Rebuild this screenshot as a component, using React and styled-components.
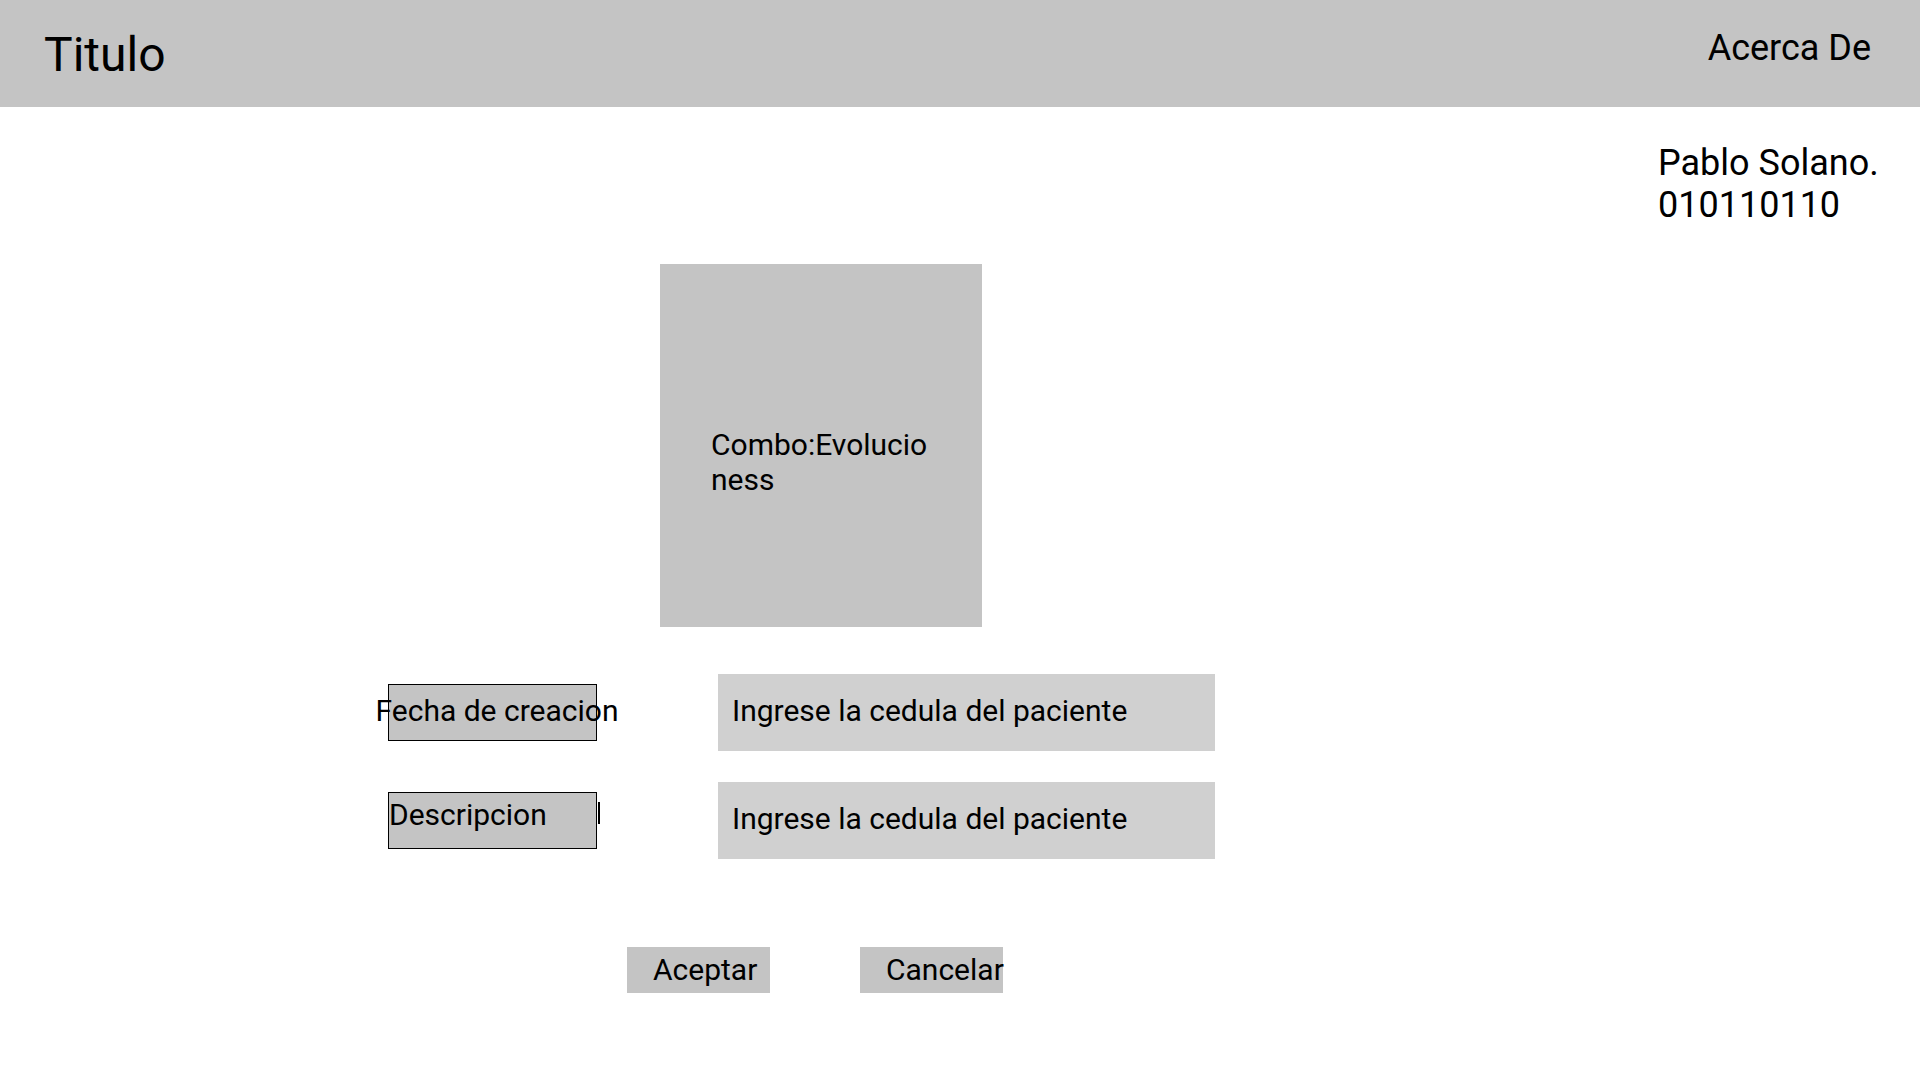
import styled, { createGlobalStyle } from "styled-components";

const GlobalStyle = createGlobalStyle`
    html, body {
        margin: 0;
        padding: 0;
        background: #ffffff;
    }
    body {
        font-family: Roboto, "Noto Sans", sans-serif;
        color: #000000;
    }
`;

export default function App() {
    return (
        <Page>
            <GlobalStyle />
            <Header>
                <Title>Titulo</Title>
                <NavLink>Acerca De</NavLink>
            </Header>
            <UserRow>
                <UserInfo>
                    Pablo Solano.
                    <br />
                    010110110
                </UserInfo>
            </UserRow>
            <Form>
                <ComboBox>
                    Combo:Evolucio
                    <br />
                    ness
                </ComboBox>
                <Fields>
                    <FieldRow>
                        <Label $center>Fecha de creacion</Label>
                        <Input>Ingrese la cedula del paciente</Input>
                    </FieldRow>
                    <FieldRow>
                        <Label>
                            Descripcion
                            <Caret />
                        </Label>
                        <Input>Ingrese la cedula del paciente</Input>
                    </FieldRow>
                </Fields>
                <Actions>
                    <Button>Aceptar</Button>
                    <Button>Cancelar</Button>
                </Actions>
            </Form>
        </Page>
    );
}

const Page = styled.div`
    width: 1920px;
    min-height: 1080px;
    background: #ffffff;
    display: flex;
    flex-direction: column;
`;

const Header = styled.header`
    height: 107px;
    background: #c4c4c4;
    display: flex;
    justify-content: space-between;
    align-items: flex-start;
    padding: 27px 49px 0 44px;
    box-sizing: border-box;
`;

const Title = styled.h1`
    margin: 0;
    font-size: 48px;
    font-weight: 400;
    line-height: 56px;
`;

const NavLink = styled.span`
    font-size: 36px;
    line-height: 42px;
`;

const UserRow = styled.div`
    display: flex;
    justify-content: flex-end;
    padding-right: 38px;
    margin-top: 35px;
`;

const UserInfo = styled.div`
    font-size: 36px;
    line-height: 42px;
    width: 224px;
    white-space: nowrap;
`;

const Form = styled.main`
    display: flex;
    flex-direction: column;
    align-items: flex-start;
    padding-left: 388px;
    margin-top: 38px;
`;

const ComboBox = styled.div`
    width: 322px;
    height: 363px;
    margin-left: 272px;
    background: #c4c4c4;
    box-sizing: border-box;
    padding: 163px 0 0 51px;
    font-size: 30px;
    line-height: 35px;
`;

const Fields = styled.div`
    display: flex;
    flex-direction: column;
    gap: 31px;
    margin-top: 47px;
`;

const FieldRow = styled.div`
    display: flex;
    align-items: center;
    gap: 121px;
`;

const Label = styled.div`
    width: 209px;
    height: 57px;
    box-sizing: border-box;
    border: 1px solid #000000;
    background: #c4c4c4;
    display: flex;
    align-items: center;
    justify-content: ${({ $center }) => ($center ? "center" : "space-between")};
    padding-left: ${({ $center }) => ($center ? "9px" : "0")};
    padding-bottom: ${({ $center }) => ($center ? "4px" : "12px")};
    white-space: nowrap;
    font-size: 30px;
    line-height: 35px;
`;

const Caret = styled.span`
    align-self: flex-start;
    width: 2px;
    height: 22px;
    background: #000000;
    margin-right: -4px;
    margin-top: 9px;
`;

const Input = styled.div`
    width: 497px;
    height: 77px;
    background: #d0d0d0;
    display: flex;
    align-items: center;
    padding: 0 0 4px 14px;
    box-sizing: border-box;
    font-size: 30px;
    line-height: 35px;
`;

const Actions = styled.div`
    display: flex;
    gap: 90px;
    margin-top: 88px;
    margin-left: 239px;
`;

const Button = styled.button`
    width: 143px;
    height: 46px;
    border: none;
    border-radius: 0;
    background: #c4c4c4;
    padding: 0 0 2px 26px;
    display: flex;
    align-items: center;
    font-family: Roboto, "Noto Sans", sans-serif;
    font-size: 30px;
    line-height: 35px;
    color: #000000;
    white-space: nowrap;
    overflow: visible;
    cursor: pointer;
`;
